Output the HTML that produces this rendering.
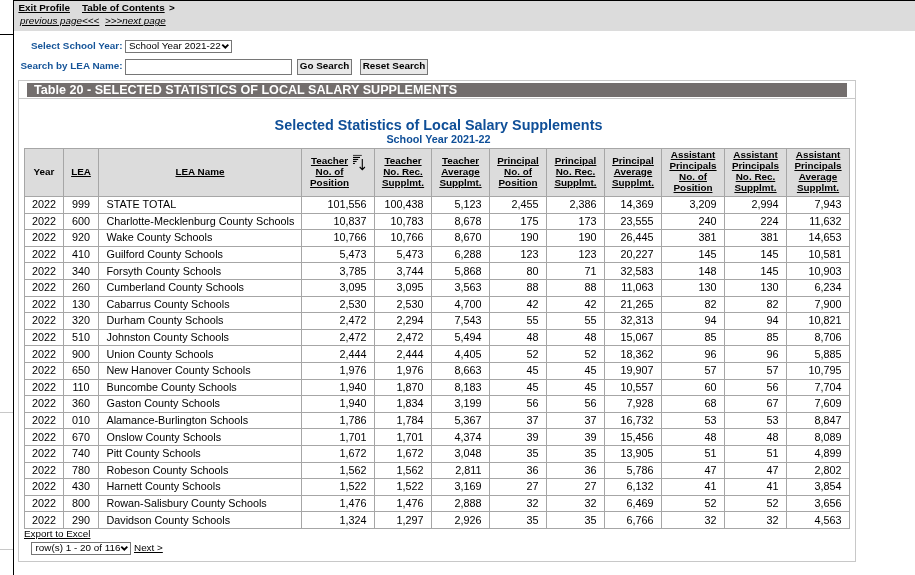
<!DOCTYPE html>
<html><head><meta charset="utf-8">
<style>
html,body{margin:0;padding:0;background:#fff;}
body{width:915px;height:575px;overflow:hidden;position:relative;will-change:transform;font-family:"Liberation Sans",sans-serif;color:#000;}
.abs{position:absolute;}
#frame{position:absolute;left:13px;top:0;width:901px;height:575px;border-left:1px solid #000;border-top:1px solid #000;}
#topbar{position:absolute;left:14px;top:1px;width:901px;height:30px;background:#dcdcdc;}
.nav1{position:absolute;top:2px;font-size:9.9px;font-weight:bold;line-height:11px;white-space:nowrap;}
.nav2{position:absolute;top:15px;font-size:9.9px;font-style:italic;line-height:11px;white-space:nowrap;}
.lbl{position:absolute;font-size:9.9px;font-weight:bold;color:#165599;line-height:11px;white-space:nowrap;}
.box{position:absolute;box-sizing:border-box;border:1px solid #767676;background:#fff;}
.btn{position:absolute;box-sizing:border-box;border:1px solid #767676;background:#e9e9e9;font-size:9.9px;font-weight:bold;text-align:center;line-height:12px;white-space:nowrap;}
#panel{position:absolute;left:18px;top:80px;width:836px;height:480px;border:1px solid #c8c8c8;}
#sep{position:absolute;left:19px;top:98px;width:836px;height:1px;background:#c8c8c8;}
#tbar{position:absolute;left:27px;top:83px;width:820px;height:14px;background:#736e6d;color:#fff;font-size:12.6px;font-weight:bold;line-height:14px;white-space:nowrap;}
#h1{position:absolute;left:0;width:877px;top:117px;text-align:center;font-size:14.4px;font-weight:bold;color:#0f4f98;line-height:17px;white-space:nowrap;}
#h2{position:absolute;left:0;width:877px;top:133px;text-align:center;font-size:10.8px;font-weight:bold;color:#0f4f98;line-height:13px;white-space:nowrap;}
table{position:absolute;left:24px;top:148px;border-collapse:collapse;table-layout:fixed;width:826px;}
th,td{border:1px solid #a6a6a6;padding:0;}
th{background:#dcdcdc;font-size:9.9px;font-weight:bold;height:45px;padding-bottom:2px;line-height:11px;text-align:center;vertical-align:middle;}
td{font-size:10.8px;height:14.6px;padding-bottom:1px;line-height:12px;white-space:nowrap;}
th.h4{height:44px;padding-bottom:3px;}
td.c{text-align:center;}
td.l{text-align:left;padding-left:7.5px;}
td.r{text-align:right;padding-right:7.6px;}
.tw{display:inline-block;}
.sort{position:absolute;left:352px;top:154px;}
</style></head><body>
<div class="abs" style="left:0;top:34px;width:13px;height:1px;background:#000"></div>
<div class="abs" style="left:0;top:412px;width:13px;height:1px;background:#c8c8c8"></div>
<div class="abs" style="left:0;top:549px;width:13px;height:1px;background:#c8c8c8"></div>
<div id="frame"></div>
<div id="topbar"></div>
<div class="nav1" style="left:18.4px"><u>Exit Profile</u></div>
<div class="nav1" style="left:82px"><u>Table of Contents</u></div><div class="nav1" style="left:169px">&gt;</div>
<div class="nav2" style="left:20px"><u>previous page&lt;&lt;&lt;</u></div>
<div class="nav2" style="left:105px"><u>&gt;&gt;&gt;next page</u></div>

<div class="lbl" style="left:31px;top:40px">Select School Year:</div>
<div class="box" style="left:125px;top:40px;width:107px;height:13px;"></div>
<div class="abs" style="left:129px;top:40px;width:92px;overflow:hidden;font-size:9.9px;line-height:11px;white-space:nowrap">School Year 2021-22</div><svg class="abs" style="left:221px;top:43px" width="9" height="7" viewBox="0 0 9 7"><path d="M1.3 1.6 L4.3 4.6 L7.3 1.6" stroke="#000" stroke-width="1.9" fill="none"/></svg>
<div class="lbl" style="left:20.4px;top:60px">Search by LEA Name:</div>
<div class="box" style="left:125px;top:59px;width:167px;height:16px;"></div>
<div class="btn" style="left:297px;top:59px;width:55px;height:16px;">Go Search</div>
<div class="btn" style="left:360px;top:59px;width:68px;height:16px;">Reset Search</div>

<div id="panel"></div>
<div id="sep"></div>
<div id="tbar"><span style="margin-left:7px">Table 20 - SELECTED STATISTICS OF LOCAL SALARY SUPPLEMENTS</span></div>
<div id="h1">Selected Statistics of Local Salary Supplements</div>
<div id="h2">School Year 2021-22</div>

<table><colgroup><col style="width:39px"><col style="width:35px"><col style="width:203px"><col style="width:73px"><col style="width:57px"><col style="width:58px"><col style="width:57px"><col style="width:58px"><col style="width:57px"><col style="width:63px"><col style="width:62px"><col style="width:63px"></colgroup>
<tr><th>Year</th><th><u>LEA</u></th><th><u>LEA Name</u></th><th style="padding-right:17px"><u>Teacher<br>No. of<br>Position</u></th><th><u>Teacher<br>No. Rec.<br>Supplmt.</u></th><th><u>Teacher<br>Average<br>Supplmt.</u></th><th><u>Principal<br>No. of<br>Position</u></th><th><u>Principal<br>No. Rec.<br>Supplmt.</u></th><th><u>Principal<br>Average<br>Supplmt.</u></th><th class="h4"><u>Assistant<br>Principals<br>No. of<br>Position</u></th><th class="h4"><u>Assistant<br>Principals<br>No. Rec.<br>Supplmt.</u></th><th class="h4"><u>Assistant<br>Principals<br>Average<br>Supplmt.</u></th></tr>
<tr><td class="c">2022</td><td class="c">999</td><td class="l">STATE TOTAL</td><td class="r">101,556</td><td class="r">100,438</td><td class="r">5,123</td><td class="r">2,455</td><td class="r">2,386</td><td class="r">14,369</td><td class="r">3,209</td><td class="r">2,994</td><td class="r">7,943</td></tr>
<tr><td class="c">2022</td><td class="c">600</td><td class="l">Charlotte-Mecklenburg County Schools</td><td class="r">10,837</td><td class="r">10,783</td><td class="r">8,678</td><td class="r">175</td><td class="r">173</td><td class="r">23,555</td><td class="r">240</td><td class="r">224</td><td class="r">11,632</td></tr>
<tr><td class="c">2022</td><td class="c">920</td><td class="l">Wake County Schools</td><td class="r">10,766</td><td class="r">10,766</td><td class="r">8,670</td><td class="r">190</td><td class="r">190</td><td class="r">26,445</td><td class="r">381</td><td class="r">381</td><td class="r">14,653</td></tr>
<tr><td class="c">2022</td><td class="c">410</td><td class="l">Guilford County Schools</td><td class="r">5,473</td><td class="r">5,473</td><td class="r">6,288</td><td class="r">123</td><td class="r">123</td><td class="r">20,227</td><td class="r">145</td><td class="r">145</td><td class="r">10,581</td></tr>
<tr><td class="c">2022</td><td class="c">340</td><td class="l">Forsyth County Schools</td><td class="r">3,785</td><td class="r">3,744</td><td class="r">5,868</td><td class="r">80</td><td class="r">71</td><td class="r">32,583</td><td class="r">148</td><td class="r">145</td><td class="r">10,903</td></tr>
<tr><td class="c">2022</td><td class="c">260</td><td class="l">Cumberland County Schools</td><td class="r">3,095</td><td class="r">3,095</td><td class="r">3,563</td><td class="r">88</td><td class="r">88</td><td class="r">11,063</td><td class="r">130</td><td class="r">130</td><td class="r">6,234</td></tr>
<tr><td class="c">2022</td><td class="c">130</td><td class="l">Cabarrus County Schools</td><td class="r">2,530</td><td class="r">2,530</td><td class="r">4,700</td><td class="r">42</td><td class="r">42</td><td class="r">21,265</td><td class="r">82</td><td class="r">82</td><td class="r">7,900</td></tr>
<tr><td class="c">2022</td><td class="c">320</td><td class="l">Durham County Schools</td><td class="r">2,472</td><td class="r">2,294</td><td class="r">7,543</td><td class="r">55</td><td class="r">55</td><td class="r">32,313</td><td class="r">94</td><td class="r">94</td><td class="r">10,821</td></tr>
<tr><td class="c">2022</td><td class="c">510</td><td class="l">Johnston County Schools</td><td class="r">2,472</td><td class="r">2,472</td><td class="r">5,494</td><td class="r">48</td><td class="r">48</td><td class="r">15,067</td><td class="r">85</td><td class="r">85</td><td class="r">8,706</td></tr>
<tr><td class="c">2022</td><td class="c">900</td><td class="l">Union County Schools</td><td class="r">2,444</td><td class="r">2,444</td><td class="r">4,405</td><td class="r">52</td><td class="r">52</td><td class="r">18,362</td><td class="r">96</td><td class="r">96</td><td class="r">5,885</td></tr>
<tr><td class="c">2022</td><td class="c">650</td><td class="l">New Hanover County Schools</td><td class="r">1,976</td><td class="r">1,976</td><td class="r">8,663</td><td class="r">45</td><td class="r">45</td><td class="r">19,907</td><td class="r">57</td><td class="r">57</td><td class="r">10,795</td></tr>
<tr><td class="c">2022</td><td class="c">110</td><td class="l">Buncombe County Schools</td><td class="r">1,940</td><td class="r">1,870</td><td class="r">8,183</td><td class="r">45</td><td class="r">45</td><td class="r">10,557</td><td class="r">60</td><td class="r">56</td><td class="r">7,704</td></tr>
<tr><td class="c">2022</td><td class="c">360</td><td class="l">Gaston County Schools</td><td class="r">1,940</td><td class="r">1,834</td><td class="r">3,199</td><td class="r">56</td><td class="r">56</td><td class="r">7,928</td><td class="r">68</td><td class="r">67</td><td class="r">7,609</td></tr>
<tr><td class="c">2022</td><td class="c">010</td><td class="l">Alamance-Burlington Schools</td><td class="r">1,786</td><td class="r">1,784</td><td class="r">5,367</td><td class="r">37</td><td class="r">37</td><td class="r">16,732</td><td class="r">53</td><td class="r">53</td><td class="r">8,847</td></tr>
<tr><td class="c">2022</td><td class="c">670</td><td class="l">Onslow County Schools</td><td class="r">1,701</td><td class="r">1,701</td><td class="r">4,374</td><td class="r">39</td><td class="r">39</td><td class="r">15,456</td><td class="r">48</td><td class="r">48</td><td class="r">8,089</td></tr>
<tr><td class="c">2022</td><td class="c">740</td><td class="l">Pitt County Schools</td><td class="r">1,672</td><td class="r">1,672</td><td class="r">3,048</td><td class="r">35</td><td class="r">35</td><td class="r">13,905</td><td class="r">51</td><td class="r">51</td><td class="r">4,899</td></tr>
<tr><td class="c">2022</td><td class="c">780</td><td class="l">Robeson County Schools</td><td class="r">1,562</td><td class="r">1,562</td><td class="r">2,811</td><td class="r">36</td><td class="r">36</td><td class="r">5,786</td><td class="r">47</td><td class="r">47</td><td class="r">2,802</td></tr>
<tr><td class="c">2022</td><td class="c">430</td><td class="l">Harnett County Schools</td><td class="r">1,522</td><td class="r">1,522</td><td class="r">3,169</td><td class="r">27</td><td class="r">27</td><td class="r">6,132</td><td class="r">41</td><td class="r">41</td><td class="r">3,854</td></tr>
<tr><td class="c">2022</td><td class="c">800</td><td class="l">Rowan-Salisbury County Schools</td><td class="r">1,476</td><td class="r">1,476</td><td class="r">2,888</td><td class="r">32</td><td class="r">32</td><td class="r">6,469</td><td class="r">52</td><td class="r">52</td><td class="r">3,656</td></tr>
<tr><td class="c">2022</td><td class="c">290</td><td class="l">Davidson County Schools</td><td class="r">1,324</td><td class="r">1,297</td><td class="r">2,926</td><td class="r">35</td><td class="r">35</td><td class="r">6,766</td><td class="r">32</td><td class="r">32</td><td class="r">4,563</td></tr>
</table>
<svg class="sort" width="14" height="17" viewBox="352 154 14 17"><g fill="#000"><rect x="353" y="154.9" width="8.8" height="1.1" opacity="0.7"/><rect x="353" y="156.9" width="7" height="1.1"/><rect x="353" y="158.9" width="5.2" height="1.1"/><rect x="353" y="160.9" width="3.6" height="1.1"/><rect x="353" y="162.9" width="1.9" height="1.1"/></g><path d="M362.3 159.1 V169.3 M359.7 167 L362.3 169.6 L364.9 167" stroke="#000" stroke-width="1.1" fill="none"/></svg>

<div class="abs" style="left:24px;top:528px;font-size:9.9px;line-height:11px;white-space:nowrap"><u>Export to Excel</u></div>
<div class="box" style="left:31px;top:542px;width:100px;height:13px;"></div>
<div class="abs" style="left:35.5px;top:542px;width:84.5px;overflow:hidden;font-size:9.9px;line-height:11px;white-space:nowrap">row(s) 1 - 20 of 116</div><svg class="abs" style="left:120px;top:545px" width="9" height="7" viewBox="0 0 9 7"><path d="M1.3 1.6 L4.3 4.6 L7.3 1.6" stroke="#000" stroke-width="1.9" fill="none"/></svg>
<div class="abs" style="left:134px;top:542px;font-size:9.9px;line-height:11px;white-space:nowrap"><u>Next &gt;</u></div>
</body></html>
